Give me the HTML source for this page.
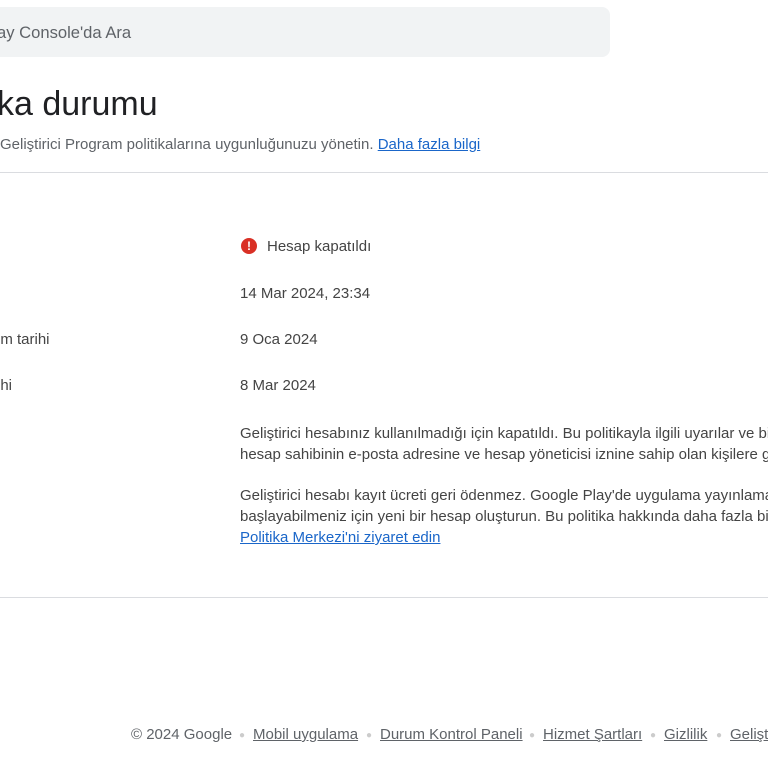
<!DOCTYPE html>
<html><head><meta charset="utf-8"><style>
html,body{margin:0;padding:0;width:768px;height:768px;overflow:hidden;background:#fff;font-family:"Liberation Sans",Arial,sans-serif;color:#3c4043}
#w{position:absolute;left:0;top:0;width:768px;height:768px;overflow:hidden}
.a{position:absolute;white-space:nowrap}
.t{font-size:15px;color:#444}
a,.l{color:#1a66c9;text-decoration:underline}
.f{font-size:15px;color:#5f6368;text-decoration:underline;top:726px}
.d{font-size:10px;color:#ccc;top:730px}
</style></head><body><div id="w">
<div class="a" style="left:-20px;top:7px;width:630px;height:50px;background:#f1f3f4;border-radius:8px"></div>
<div class="a" style="left:-3px;top:23px;font-size:16.6px;color:#5f6368">ay Console'da Ara</div>
<div class="a" style="left:-3px;top:85px;font-size:34px;color:#202124">ka durumu</div>
<div class="a t" style="left:0;top:136px;color:#5f6368">Geliştirici Program politikalarına uygunluğunuzu yönetin. <span class="l">Daha fazla bilgi</span></div>
<div class="a" style="left:0;top:172px;width:768px;height:1px;background:#dadce0"></div>
<div class="a" style="left:241px;top:238px;width:16px;height:16px;border-radius:50%;background:#d93025;color:#fff;font-size:12px;font-weight:bold;text-align:center;line-height:16px">!</div>
<div class="a t" style="left:267px;top:238px">Hesap kapatıldı</div>
<div class="a t" style="left:240px;top:285px">14 Mar 2024, 23:34</div>
<div class="a t" style="left:-3px;top:331px">im tarihi</div>
<div class="a t" style="left:240px;top:331px">9 Oca 2024</div>
<div class="a t" style="left:-3px;top:377px">ihi</div>
<div class="a t" style="left:240px;top:377px">8 Mar 2024</div>
<div class="a t" style="left:240px;top:423px;line-height:21px">Geliştirici hesabınız kullanılmadığı için kapatıldı. Bu politikayla ilgili uyarılar ve bildirimler<br>hesap sahibinin e-posta adresine ve hesap yöneticisi iznine sahip olan kişilere gönderilir.</div>
<div class="a t" style="left:240px;top:485px;line-height:21px">Geliştirici hesabı kayıt ücreti geri ödenmez. Google Play'de uygulama yayınlamaya yeniden<br>başlayabilmeniz için yeni bir hesap oluşturun. Bu politika hakkında daha fazla bilgi için<br><span class="l">Politika Merkezi'ni ziyaret edin</span></div>
<div class="a" style="left:0;top:597px;width:768px;height:1px;background:#dadce0"></div>
<div class="a" style="left:131px;top:726px;font-size:15px;color:#5f6368">© 2024 Google</div>
<div class="a d" style="left:239px">●</div>
<div class="a f" style="left:253px">Mobil uygulama</div>
<div class="a d" style="left:366px">●</div>
<div class="a f" style="left:380px">Durum Kontrol Paneli</div>
<div class="a d" style="left:529px">●</div>
<div class="a f" style="left:543px">Hizmet Şartları</div>
<div class="a d" style="left:650px">●</div>
<div class="a f" style="left:664px">Gizlilik</div>
<div class="a d" style="left:716px">●</div>
<div class="a f" style="left:730px">Geliştirici</div>
</div></body></html>
